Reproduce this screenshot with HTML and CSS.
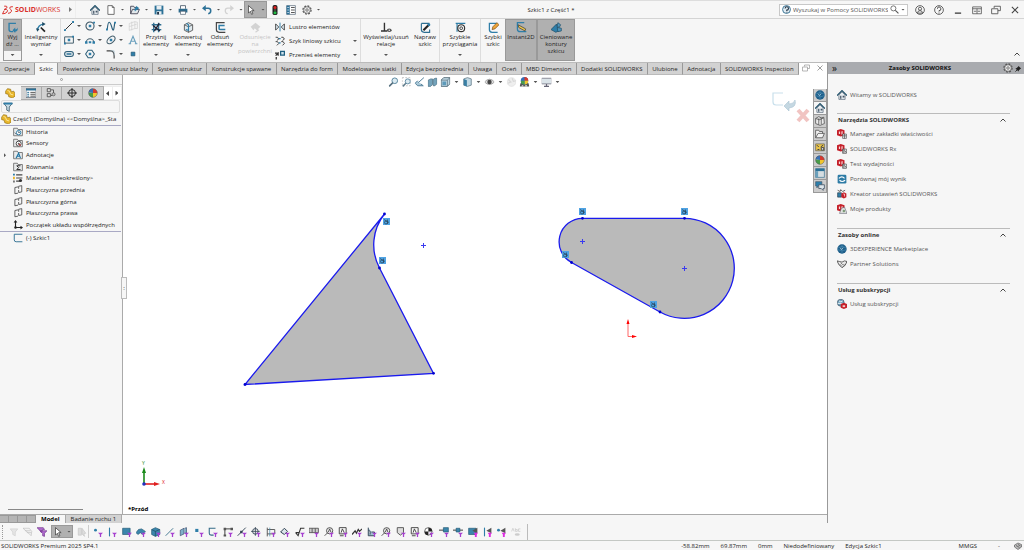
FILE: index.html
```html
<!DOCTYPE html>
<html lang="pl">
<head>
    <meta charset="UTF-8">
    <meta name="viewport" content="width=device-width, initial-scale=1.0">
    <title>Szkic1 z Część1 *</title>
    <link rel="stylesheet" href="styles.css">
</head>
<body>
<svg class="sprite" aria-hidden="true">
    <!-- title bar -->
    <symbol id="ds" viewBox="0 0 22 18"><g fill="none" stroke="#d9302c" stroke-width="1.8"><path d="M4 2h4q3 1 0 4l-4 2h4q4 1 1 5-3 3-8 3l3-6M20 3q-6-1-6 3 5 3 3 6-1 3-6 3"/></g></symbol>
    <symbol id="home" viewBox="0 0 16 16"><path d="M3 8v7h10V8L8 3z" fill="#e9eef1" stroke="#456" /><path d="M0 9l8-8 8 8" fill="none" stroke="#1f4f68" stroke-width="2"/><path d="M5 9h2v5H5zM9 9h3v3H9z" fill="#456"/></symbol>
    <symbol id="doc" viewBox="0 0 16 16"><path d="M3 1h7l3 3v11H3zM10 1v3h3" fill="#fff" stroke="#555" stroke-width="1.3"/></symbol>
    <symbol id="open" viewBox="0 0 16 16"><path d="M1 14V2h5l1 2h5v3M1 14l3-7h11l-3 7z" fill="#e3e9ec" stroke="#445" stroke-width="1.4"/><path d="M8 10V5h4M10 2l4 3-4 3z" fill="#2b7fa8" stroke="#2b7fa8"/></symbol>
    <symbol id="save" viewBox="0 0 16 16"><path d="M1 1h14v14H1z" fill="#2c7197"/><path d="M4 1h8v6H4zM4 10h8v5H4z" fill="#e8eef2"/><path d="M5 11h3v4H5z" fill="#234"/></symbol>
    <symbol id="print" viewBox="0 0 16 16"><path d="M4 6V1h8v5" fill="#fff" stroke="#456" stroke-width="1.3"/><path d="M1 6h14v6H1z" fill="#2c6a8c"/><path d="M4 10h8v5H4z" fill="#fff" stroke="#456"/></symbol>
    <symbol id="undo" viewBox="0 0 16 16"><path d="M3 5h7q4 0 4 4t-4 5" fill="none" stroke="#2c7197" stroke-width="2.4"/><path d="M0 5l6-5v10z" fill="#2c7197"/></symbol>
    <symbol id="redo" viewBox="0 0 16 16"><path d="M13 5H6q-4 0-4 4t4 5" fill="none" stroke="#d2d2d2" stroke-width="2"/><path d="M16 5l-6-5v10z" fill="#d2d2d2"/></symbol>
    <symbol id="cursor" viewBox="0 0 16 16"><path d="M4 1v12l3-3 2 5 2-1-2-5h4z" fill="#fff" stroke="#333" stroke-width="1.1"/></symbol>
    <symbol id="traffic" viewBox="0 0 16 16"><rect x="4" y="0" width="8" height="16" rx="3" fill="#222"/><circle cx="8" cy="4" r="2.4" fill="#d22"/><circle cx="8" cy="8" r="1.6" fill="#554"/><circle cx="8" cy="12.5" r="2.4" fill="#2b4"/></symbol>
    <symbol id="list" viewBox="0 0 16 16"><path d="M1 1h14v14H1z" fill="#fff" stroke="#456"/><path d="M1 1h5v14H1z" fill="#2c7197"/><path d="M8 4h6M8 8h6M8 12h6" stroke="#333" stroke-width="1.3"/><path d="M2 4h3M2 8h3M2 12h3" stroke="#cde" stroke-width="1.3"/></symbol>
    <symbol id="list-tab" viewBox="0 0 16 16"><path d="M0 1h16v14H0z" fill="#fff" stroke="#345"/><path d="M0 1h16v3H0z" fill="#2c7197"/><path d="M2 7h3M2 10h3M2 13h3" stroke="#2c7197" stroke-width="1.6"/><path d="M7 7h8M7 10h8M7 13h8" stroke="#333" stroke-width="1.3"/></symbol>
    <symbol id="gear" viewBox="0 0 16 16"><circle cx="8" cy="8" r="6.5" fill="none" stroke="#555" stroke-width="2" stroke-dasharray="3 2.1"/><circle cx="8" cy="8" r="5.3" fill="#eee" stroke="#555" stroke-width="1.1"/><circle cx="8" cy="8" r="2" fill="none" stroke="#555" stroke-width="1.2"/></symbol>
    <symbol id="help-blue" viewBox="0 0 16 16"><circle cx="8" cy="8" r="7" fill="#e3eef4" stroke="#2c6a8c" stroke-width="1.6"/><path d="M5.5 6q0-3 3-3t3 3-3 3v1.5M8.5 12v1.5" fill="none" stroke="#234" stroke-width="2"/></symbol>
    <symbol id="help" viewBox="0 0 16 16"><circle cx="8" cy="8" r="7" fill="none" stroke="#444" stroke-width="1.3"/><path d="M5.5 6q0-3 2.5-3t3 3-3 3v1.5M8 12v1.5" fill="none" stroke="#444" stroke-width="1.5"/></symbol>
    <symbol id="user" viewBox="0 0 16 16"><circle cx="8" cy="8" r="7" fill="none" stroke="#444" stroke-width="1.3"/><circle cx="8" cy="6" r="2.5" fill="none" stroke="#444" stroke-width="1.3"/><path d="M4 13q0-4 4-4t4 4z" fill="none" stroke="#444" stroke-width="1.3"/></symbol>
    <symbol id="lens" viewBox="0 0 16 16"><circle cx="6" cy="6" r="4.5" fill="none" stroke="#555" stroke-width="1.4"/><path d="M9.5 9.5L15 15" stroke="#555" stroke-width="2"/></symbol>
    <symbol id="min" viewBox="0 0 16 16"><path d="M3 13h10" stroke="#333" stroke-width="2"/></symbol>
    <symbol id="span" viewBox="0 0 16 16"><path d="M1 3h14v11H1zM1 6h14M8 6v8M3 10h4M9 10h4" fill="none" stroke="#555" stroke-width="1.3"/></symbol>
    <symbol id="restore" viewBox="0 0 16 16"><path d="M5 5V2h10v7h-4M1 6h10v8H1z" fill="none" stroke="#555" stroke-width="1.4"/></symbol>
    <symbol id="close" viewBox="0 0 16 16"><path d="M3 3l10 10M13 3L3 13" stroke="#444" stroke-width="1.7"/></symbol>
    <symbol id="up" viewBox="0 0 16 16"><path d="M3 11l5-5 5 5" fill="none" stroke="#444" stroke-width="2"/></symbol>

    <!-- ribbon -->
    <symbol id="sketch" viewBox="0 0 16 16"><path d="M13 2H3v9q0 3 3 3h3" fill="none" stroke="#2f7ea8" stroke-width="2"/><path d="M8 12l4-4v3q3 0 3-3 2 6-3 6v2z" fill="#2f7ea8"/></symbol>
    <symbol id="dim" viewBox="0 0 16 16"><path d="M2 12q1-8 9-9" fill="none" stroke="#2f7ea8" stroke-width="2"/><path d="M0 9l5 1-3 4zM9 0l5 3-5 3z" fill="#1c4c66"/><path d="M7 8l6 6" stroke="#222" stroke-width="2.5"/></symbol>
    <symbol id="line" viewBox="0 0 16 16"><path d="M2 14L14 2" stroke="#333" stroke-width="1.6"/><path d="M0 13h3v3H0zM13 0h3v3h-3z" fill="#2f7ea8"/></symbol>
    <symbol id="circle" viewBox="0 0 16 16"><circle cx="8" cy="8" r="6.5" fill="none" stroke="#3b5565" stroke-width="1.7"/><path d="M6 6h4v4H6zM13 1h3v3h-3z" fill="#2f7ea8"/></symbol>
    <symbol id="spline" viewBox="0 0 16 16"><path d="M2 14Q3 2 5 2t4 7 3 5 2-12" fill="none" stroke="#2d607c" stroke-width="1.9"/><path d="M0 12h3v3H0zM13 1h3v3h-3z" fill="#2f7ea8"/></symbol>
    <symbol id="plane-off" viewBox="0 0 16 16"><path d="M2 4l9-3v11l-9 3zM6 1v14M2 9l12-4M11 1l4 1v10h-4" fill="none" stroke="#ccc"/></symbol>
    <symbol id="rect" viewBox="0 0 16 16"><path d="M1 3h14v10H1z" fill="none" stroke="#46606e" stroke-width="1.6"/><path d="M6 6h4v4H6zM0 12h3v3H0zM13 1h3v3h-3z" fill="#2f7ea8"/></symbol>
    <symbol id="arc" viewBox="0 0 16 16"><path d="M2 12a6 6 0 1 1 12 0" fill="none" stroke="#46606e" stroke-width="1.8"/><path d="M0 10h4v4H0zM12 10h4v4h-4zM6 10h4v3H6z" fill="#2f7ea8"/></symbol>
    <symbol id="ellipse" viewBox="0 0 16 16"><ellipse cx="8" cy="8" rx="7.5" ry="4.5" transform="rotate(-42 8 8)" fill="none" stroke="#46606e" stroke-width="1.7"/><path d="M6 6h4v4H6z" fill="#2f7ea8"/></symbol>
    <symbol id="letter" viewBox="0 0 16 16"><path d="M3 14L8 2l5 12M5 10h6M1 14h4M11 14h4" fill="none" stroke="#6ba0bd" stroke-width="1.8"/></symbol>
    <symbol id="slot" viewBox="0 0 16 16"><rect x="1" y="4" width="14" height="8" rx="4" fill="none" stroke="#2f607a" stroke-width="1.8"/><path d="M4 6h8v4H4z" fill="#5b91ae"/></symbol>
    <symbol id="polygon" viewBox="0 0 16 16"><path d="M5 2h6l4 6-4 6H5L1 8z" fill="none" stroke="#2f607a" stroke-width="1.7"/><path d="M6 6h4v4H6z" fill="#2f7ea8"/></symbol>
    <symbol id="fillet" viewBox="0 0 16 16"><path d="M1 3h6q6 0 6 8v4" fill="none" stroke="#444" stroke-width="1.8"/><path d="M7 3h6v7" fill="none" stroke="#9bbccb"/></symbol>
    <symbol id="point" viewBox="0 0 16 16"><path d="M5 5h6v6H5z" fill="#2f7ea8" stroke="#23536d"/></symbol>
    <symbol id="trim" viewBox="0 0 16 16"><path d="M1 4h14M1 11h14M4 1v14M11 1v14" stroke="#2f6f92" stroke-width="2"/><path d="M5 13l7-11M3 5l10 8" stroke="#223" stroke-width="2"/></symbol>
    <symbol id="convert" viewBox="0 0 16 16"><path d="M2 4l6-3 6 3v8l-6 3-6-3z" fill="#dfe9ee" stroke="#555" stroke-width="1.3"/><path d="M2 4l6 3 6-3M8 7v8" fill="none" stroke="#555" stroke-width="1.2"/><path d="M5 2l3 2v8l-4-1" fill="none" stroke="#2f7ea8" stroke-width="1.7"/></symbol>
    <symbol id="offset" viewBox="0 0 16 16"><path d="M14 1H2v10q0 4 4 4h9" fill="none" stroke="#444" stroke-width="1.7"/><path d="M14 5H6v5q0 1 2 1h7" fill="none" stroke="#2f7ea8" stroke-width="2.2"/></symbol>
    <symbol id="surf-off" viewBox="0 0 16 16"><path d="M1 7l7-6 7 6-5 5-3-3-2 3z" fill="#d3d3d3"/><path d="M8 8l4 4-4 3" fill="none" stroke="#d3d3d3" stroke-width="2"/></symbol>
    <symbol id="mirror" viewBox="0 0 16 16"><path d="M1 3v10l5-5zM15 3v10l-5-5z" fill="#dbe8ef" stroke="#333" stroke-width="1.3"/><path d="M8 1v14" stroke="#2f7ea8" stroke-width="1.5"/></symbol>
    <symbol id="pattern" viewBox="0 0 16 16"><g fill="none" stroke="#333" stroke-width="1.4"><path d="M1 2h3l2 3-3 2M10 2h3l2 3-3 2M1 9h3l2 3-3 3M10 9h3l2 3-3 3"/></g><path d="M6 4h3M6 11h3" stroke="#2f7ea8" stroke-width="2"/></symbol>
    <symbol id="move" viewBox="0 0 16 16"><path d="M9 2h6v6H9z" fill="#cfe2ec" stroke="#1f5f80" stroke-width="2"/><path d="M2 15v-4M0 5h5v4M1 9l5-5" fill="none" stroke="#333" stroke-width="2"/></symbol>
    <symbol id="relations" viewBox="0 0 16 16"><path d="M5 1v12M0 13h9" stroke="#333" stroke-width="2"/><ellipse cx="12" cy="12" rx="3.5" ry="2.5" fill="#555"/><circle cx="12" cy="12" r="1" fill="#fff"/></symbol>
    <symbol id="repair" viewBox="0 0 16 16"><path d="M2 2h11v3M2 2v9q0 4 4 4h8v-4" fill="none" stroke="#2f6f92" stroke-width="1.7"/><path d="M5 12l8-8" stroke="#222" stroke-width="3"/><circle cx="13" cy="4" r="2" fill="#2f7ea8"/></symbol>
    <symbol id="snap" viewBox="0 0 16 16"><path d="M1 2h14M3 2v12" stroke="#2f7ea8" stroke-width="1.7"/><circle cx="9" cy="9" r="5" fill="none" stroke="#333" stroke-width="1.7"/><circle cx="9" cy="9" r="2" fill="none" stroke="#333" stroke-width="1.3"/></symbol>
    <symbol id="rapid" viewBox="0 0 16 16"><path d="M13 2H2v9q0 4 4 4h8" fill="none" stroke="#2f7ea8" stroke-width="1.8"/><path d="M6 11l1-4 6-6 3 3-6 6z" fill="#eea63a" stroke="#7a4a12"/></symbol>
    <symbol id="instant" viewBox="0 0 16 16"><path d="M12 1H2v9q0 4 4 4h9" fill="none" stroke="#2f7ea8" stroke-width="1.8"/><path d="M3 4l11 6-1 3-9-5z" fill="#f0c84a" stroke="#333"/></symbol>
    <symbol id="shaded" viewBox="0 0 16 16"><path d="M0 11l8-8 3 10-4 2z" fill="#2f7ea8" stroke="#1c4c66"/><path d="M10 1l4 3-2 4-3-2zM9 8l6 1v4l-5 1z" fill="#4f97bd" stroke="#1c4c66"/></symbol>

    <!-- view toolbar -->
    <symbol id="zoom-fit" viewBox="0 0 16 16"><circle cx="10" cy="6" r="4.5" fill="#dcebf2" stroke="#5f8ba2" stroke-width="1.6"/><path d="M7 9l-6 6" stroke="#55707f" stroke-width="2.6"/></symbol>
    <symbol id="zoom-area" viewBox="0 0 16 16"><path d="M1 1h13v13H1z" fill="none" stroke="#aaa" stroke-dasharray="3 2"/><circle cx="10" cy="7" r="4" fill="#dcebf2" stroke="#5f8ba2" stroke-width="1.5"/><path d="M7 10l-5 5" stroke="#5f7c8c" stroke-width="2.3"/></symbol>
    <symbol id="prev-view" viewBox="0 0 16 16"><path d="M15 1L6 9M5 6l-4 4 4 4h9l-4-3" fill="#a9c8d8" stroke="#55809a" stroke-width="1.6"/></symbol>
    <symbol id="section" viewBox="0 0 16 16"><path d="M1 5l4-2h3v9l-3 3H1zM9 4l3-2h3v9l-3 3H9z" fill="#74a3bb" stroke="#456a7d"/></symbol>
    <symbol id="cube" viewBox="0 0 16 16"><path d="M1 5l4-4h10v10l-4 4H1z" fill="#bfd7e3" stroke="#47616f" stroke-width="1.3"/><path d="M3 7h6v6H3z" fill="#5d9aba"/><path d="M1 5h10v10M11 5l4-4" fill="none" stroke="#47616f"/></symbol>
    <symbol id="cylinder" viewBox="0 0 16 16"><path d="M2 3l6-2 6 2v10l-6 2-6-2z" fill="#c3dae5" stroke="#667e8a" stroke-width="1.3"/><path d="M2 3l5 2v10l-5-2z" fill="#397fa4"/></symbol>
    <symbol id="eye" viewBox="0 0 16 16"><path d="M0 8q8-9 16 0-8 8-16 0z" fill="#ddd" stroke="#999" stroke-width="1.3"/><circle cx="8" cy="8" r="3.5" fill="#444"/></symbol>
    <symbol id="ball-off" viewBox="0 0 16 16"><circle cx="8" cy="8" r="7" fill="#eee" stroke="#ddd"/><path d="M3 4l4 4-5 2M9 2l2 5 4-1" fill="none" stroke="#d8d8d8" stroke-width="2"/></symbol>
    <symbol id="ball" viewBox="0 0 16 16"><circle cx="8" cy="8" r="7.5" fill="#d9e1e8"/><path d="M8 8V1a7 7 0 0 0-7 6z" fill="#3770b8"/><path d="M8 8V1a7 7 0 0 1 7 7z" fill="#d63a2e"/><path d="M8 8h7a7 7 0 0 1-7 7z" fill="#f0c52e"/><path d="M8 8v7a7 7 0 0 1-7-8z" fill="#4a9d48"/><circle cx="8" cy="8" r="7" fill="none" stroke="#555" stroke-width=".8"/></symbol>
    <symbol id="scene" viewBox="0 0 16 16"><path d="M0 15l2-6h12l2 6z" fill="#555"/><circle cx="8" cy="6" r="6" fill="#3770b8"/><path d="M8 6V0a6 6 0 0 1 6 6z" fill="#d63a2e"/><path d="M8 6h6a6 6 0 0 1-6 6z" fill="#f0c52e"/><path d="M8 6v6a6 6 0 0 1-6-6z" fill="#4a9d48"/><path d="M3 15l1-2h2v2zM9 15v-2h3v2z" fill="#ddd"/></symbol>
    <symbol id="monitor" viewBox="0 0 16 16"><path d="M0 2h16v9H0z" fill="#dbe4e9" stroke="#778" stroke-width="1.3"/><path d="M4 15h8M8 11v4" stroke="#667" stroke-width="2"/></symbol>

    <!-- feature tree -->
    <symbol id="part" viewBox="0 0 16 16"><path d="M1 5l3-4 5 1 1 4 4-1 2 4v4l-4 3-6-2-1-4-4-1z" fill="#e8b62c" stroke="#8f6b10"/><path d="M4 4l3 1 2 5 4 1" fill="none" stroke="#fbe490" stroke-width="1.6"/></symbol>
    <symbol id="config" viewBox="0 0 16 16"><path d="M2 1h5v5H2zM2 9h5v5H2zM8 3h4v5M8 12h2" fill="#ddd" stroke="#444" stroke-width="1.3"/><circle cx="12" cy="10" r="2.5" fill="#bbb" stroke="#444"/></symbol>
    <symbol id="target" viewBox="0 0 16 16"><circle cx="8" cy="8" r="5.5" fill="none" stroke="#222" stroke-width="1.5"/><path d="M8 0v16M0 8h16" stroke="#222" stroke-width="1.5"/></symbol>
    <symbol id="filter" viewBox="0 0 16 16"><path d="M1 2h14l-5 6v7l-4-2V8z" fill="#c9dbe4" stroke="#38586a" stroke-width="1.3"/><path d="M1 1h14v3H1z" fill="#2f7ea8"/></symbol>
    <symbol id="folder" viewBox="0 0 16 16"><path d="M1 14V2h6l1 2h7v10z" fill="#e8eaeb" stroke="#666" stroke-width="1.3"/></symbol>
    <symbol id="f-history" viewBox="0 0 16 16"><use href="#folder"/><circle cx="9" cy="9" r="3.5" fill="#fff" stroke="#2f7ea8" stroke-width="1.5"/><path d="M9 7v2h2M3 9l3 3" fill="none" stroke="#234" stroke-width="1.2"/></symbol>
    <symbol id="f-sensor" viewBox="0 0 16 16"><use href="#folder"/><circle cx="9" cy="9" r="4" fill="#fff" stroke="#444" stroke-width="1.5"/><path d="M9 9l3 3" stroke="#c33" stroke-width="2"/><circle cx="9" cy="9" r="1.5" fill="#555"/></symbol>
    <symbol id="f-note" viewBox="0 0 16 16"><use href="#folder"/><path d="M5 13l4-8 3 8M6 10h5" fill="none" stroke="#2478a6" stroke-width="1.8"/></symbol>
    <symbol id="f-equation" viewBox="0 0 16 16"><use href="#folder"/><path d="M12 6H6l3 3-3 3h6" fill="none" stroke="#333" stroke-width="1.6"/></symbol>
    <symbol id="material" viewBox="0 0 16 16"><path d="M5 3h10M5 8h10M5 13h6" stroke="#444" stroke-width="1.9"/><path d="M0 1h3v3H0z" fill="#2f7ea8"/><path d="M0 6h3v4H0z" fill="#e8b62c"/><path d="M0 12h3v3H0z" fill="#777"/><circle cx="12" cy="12" r="2.5" fill="#333"/></symbol>
    <symbol id="plane" viewBox="0 0 16 16"><path d="M8 3L3 4v10l5-1M9 2l5-1v10l-5 1M9 2v4M9 8v4" fill="none" stroke="#444" stroke-width="1.3"/></symbol>
    <symbol id="origin" viewBox="0 0 16 16"><path d="M4 2v10h10" fill="none" stroke="#222" stroke-width="1.8"/><path d="M1 4l3-4 3 4zM12 9l4 3-4 3z" fill="#222"/><circle cx="4" cy="12" r="2" fill="#222"/></symbol>
    <symbol id="sketch-item" viewBox="0 0 16 16"><path d="M15 2H2v9q0 3 3 3h10" fill="none" stroke="#2f6f92" stroke-width="1.5"/></symbol>

    <!-- task pane -->
    <symbol id="globe" viewBox="0 0 16 16"><circle cx="8" cy="8" r="7.5" fill="#1f5f8a"/><path d="M2 6q6-4 12 0M1 9q7 4 14 0M8 1v14" fill="none" stroke="#4b8fb6"/><path d="M5 6l2 3 3-3" stroke="#cfe4ef" fill="none"/></symbol>
    <symbol id="library" viewBox="0 0 16 16"><path d="M1 4l5-3 4 2 4-1 1 10-7 3-7-3zM6 4v10M10 3v10M1 4l6 2 7-3" fill="#ececec" stroke="#555" stroke-width="1.3"/></symbol>
    <symbol id="folder-open" viewBox="0 0 16 16"><path d="M1 14V2h5l1 2h5v3M1 14l4-7h10l-3 7z" fill="#f3f3f3" stroke="#555" stroke-width="1.3"/></symbol>
    <symbol id="palette" viewBox="0 0 16 16"><path d="M1 3h14v11H1z" fill="#e8c34a" stroke="#555"/><path d="M3 5l3 3M13 5l-4 3M4 12h3M10 9h4v4h-4z" stroke="#444" stroke-width="1.6" fill="#eee"/></symbol>
    <symbol id="props" viewBox="0 0 16 16"><path d="M1 1h14v14H1z" fill="#d5dde1" stroke="#2c6a8c"/><path d="M1 1h14v4H1z" fill="#2c7197"/><path d="M1 5h4v10H1z" fill="#6aa0bc"/></symbol>
    <symbol id="forum" viewBox="0 0 16 16"><path d="M1 1h10v7H5l-2 3V8H1z" fill="#2c7fab" stroke="#456"/><path d="M6 6h9v6h-2v3l-3-3H6z" fill="#dde6eb" stroke="#456" stroke-width="1.3"/></symbol>
    <symbol id="sw" viewBox="0 0 16 16"><path d="M0 2l6-2 6 2v8l-6 2-6-2z" fill="#c5202a"/><path d="M3 4h2v4H3zM7 4l2-1v5l-2 1z" fill="#f6d5d5"/></symbol>
    <symbol id="sw-tab" viewBox="0 0 16 16"><use href="#sw"/><path d="M9 8h6v7H9zM9 11h6M12 8v7" fill="#eee" stroke="#444"/></symbol>
    <symbol id="sw-rx" viewBox="0 0 16 16"><use href="#sw"/><path d="M9 8h6v7H9z" fill="#eee" stroke="#444"/><path d="M10 14V9h2v2l3 3M14 11l-3 3" fill="none" stroke="#444"/></symbol>
    <symbol id="compare" viewBox="0 0 16 16"><rect x="1" y="1" width="14" height="14" rx="2" fill="#2d7ba5"/><path d="M3 7q5-5 9 0M13 10q-5 4-9 0" fill="none" stroke="#fff" stroke-width="1.8"/></symbol>
    <symbol id="wizard" viewBox="0 0 16 16"><path d="M1 2l4 2 1-3 3 3 4-2" fill="none" stroke="#444" stroke-width="1.3"/><path d="M1 6h6v7H1z" fill="#2f7ea8" stroke="#234"/><path d="M7 7l4-2 4 2v6l-4 2-4-2z" fill="#c5202a"/><path d="M10 8h2v4" fill="none" stroke="#fff"/></symbol>
    <symbol id="products" viewBox="0 0 16 16"><use href="#sw"/><path d="M4 15l3-8 5-2 4 10z" fill="#e1e4e1" stroke="#667"/><circle cx="11" cy="11" r="2" fill="#7b9a78"/></symbol>
    <symbol id="handshake" viewBox="0 0 16 16"><path d="M0 3l4 1 4 1 4-2 4 1-3 6-5 4-5-5z" fill="#e7e7e7" stroke="#444" stroke-width="1.3"/><path d="M6 6l3 3 4 1M4 8l4 4" fill="none" stroke="#444"/></symbol>
    <symbol id="service" viewBox="0 0 16 16"><circle cx="6" cy="6" r="5.5" fill="#6fa3bf" stroke="#345"/><path d="M3 3q3 3 6 0M1 7h8" fill="none" stroke="#fff" stroke-width="1.3"/><path d="M6 8l5-2 5 2v6l-5 2-5-2z" fill="#c5202a"/><path d="M9 10h4v3H9z" fill="#f3caca"/></symbol>
    <symbol id="tag-gray" viewBox="0 0 16 16"><path d="M1 6l7-4 7 3v5l-7 5-7-5z" fill="#bbb" stroke="#555" stroke-width="1.3"/><path d="M4 7l7 4M8 5l5 3" stroke="#444" stroke-width="1.3"/></symbol>
    <symbol id="pin" viewBox="0 0 16 16"><path d="M8 2l6 6-2 1-3 3-1 3-7-7 3-1 3-3z" fill="#222"/><path d="M5 11l-4 4" stroke="#222" stroke-width="2"/></symbol>

    <!-- selection filters -->
    <symbol id="funnel" viewBox="0 0 16 16"><path d="M8 9h8l-3 3v4h-2v-4z" fill="#a63fd0"/></symbol>
    <symbol id="funnel-eye" viewBox="0 0 16 16"><path d="M7 6l8-5v9z" fill="#555"/><path d="M9 9h7l-2 3v4h-3v-4z" fill="#dd2be0"/></symbol>
    <symbol id="g-funnel-off" viewBox="0 0 16 16"><path d="M2 3h12l-4 5v6l-4-2V8z" fill="#e5e5e5" stroke="#ccc"/></symbol>
    <symbol id="g-funnels-off" viewBox="0 0 16 16"><path d="M0 2h10l4 5-1 7-4-4z" fill="#f2f2f2" stroke="#bbb"/><path d="M3 6h9M6 9h7" stroke="#bbb"/></symbol>
    <symbol id="g-funnels" viewBox="0 0 16 16"><path d="M0 1h10l2 3H9L7 9 4 5zM5 6h11l-4 4v5l-3-1v-4z" fill="#b16bd0" stroke="#6b2f86"/></symbol>
    <symbol id="g-wand-off" viewBox="0 0 16 16"><path d="M2 2h5v11H2zM8 2l6 8-3 1 1 4-4-4z" fill="#ddd" stroke="#c4c4c4"/></symbol>
    <symbol id="g-point" viewBox="0 0 16 16"><circle cx="4" cy="5" r="2.3" fill="#2f7ea8"/></symbol>
    <symbol id="g-vline" viewBox="0 0 16 16"><path d="M4 1v14" stroke="#2f7ea8" stroke-width="1.8"/></symbol>
    <symbol id="g-face" viewBox="0 0 16 16"><path d="M1 2h12v10H1z" fill="#3b86ac" stroke="#1f536f"/></symbol>
    <symbol id="g-surface" viewBox="0 0 16 16"><path d="M0 9l4-5 5-1 6 4-5 5-3-3-4 3z" fill="#3b86ac" stroke="#1f536f"/></symbol>
    <symbol id="g-solid" viewBox="0 0 16 16"><path d="M1 4l6-3 7 3v8l-7 3-6-3z" fill="#3b86ac" stroke="#1f536f"/><path d="M1 4l6 3v8M7 7l7-3" fill="none" stroke="#1a455c"/></symbol>
    <symbol id="g-axis" viewBox="0 0 16 16"><path d="M1 14L13 2" stroke="#4c7d96" stroke-width="1.6"/></symbol>
    <symbol id="g-plane" viewBox="0 0 16 16"><path d="M2 5l6-3v9l-6 3zM9 2l3-1v9H9" fill="#7fb0c9" stroke="#346"/></symbol>
    <symbol id="g-sq" viewBox="0 0 16 16"><path d="M2 3h5v5H2z" fill="#2f7ea8"/></symbol>
    <symbol id="g-sketch" viewBox="0 0 16 16"><path d="M12 2H2v8q0 3 3 3h4" fill="none" stroke="#346b88" stroke-width="1.7"/></symbol>
    <symbol id="g-seg" viewBox="0 0 16 16"><path d="M3 14V3h12" fill="none" stroke="#444" stroke-width="1.6"/><path d="M1 1h4v4H1zM1 12h4v3H1zM12 1h4v4h-4z" fill="#555"/></symbol>
    <symbol id="g-mid" viewBox="0 0 16 16"><path d="M1 14L14 1" stroke="#345" stroke-width="1.5"/><path d="M5 6h4v4H5z" fill="#345"/></symbol>
    <symbol id="g-center" viewBox="0 0 16 16"><circle cx="7" cy="7" r="4.5" fill="none" stroke="#345" stroke-width="1.5"/><path d="M7 0v14M0 7h14" stroke="#345" stroke-width="1.3"/></symbol>
    <symbol id="g-dim" viewBox="0 0 16 16"><path d="M2 1v14M6 4h8v7H6M2 4h4M2 11h4" fill="none" stroke="#555" stroke-width="1.5"/><path d="M6 1v14" stroke="#2f7ea8"/></symbol>
    <symbol id="g-tag" viewBox="0 0 16 16"><path d="M1 8l6-6 5 5-5 5z" fill="#dbe5ea" stroke="#345" stroke-width="1.6"/></symbol>
    <symbol id="g-check" viewBox="0 0 16 16"><path d="M1 9l4 5 4-12h6M1 9h5" fill="none" stroke="#333" stroke-width="1.7"/></symbol>
    <symbol id="g-frame" viewBox="0 0 16 16"><path d="M0 2h15v7H0zM5 2v7M10 2v7" fill="#ccc" stroke="#555" stroke-width="1.4"/></symbol>
    <symbol id="g-balloon" viewBox="0 0 16 16"><circle cx="9" cy="6" r="5" fill="#eee" stroke="#444" stroke-width="1.4"/><path d="M6 9l-5 5M7 8l2-5 2 5" fill="none" stroke="#444" stroke-width="1.4"/></symbol>
    <symbol id="g-datum" viewBox="0 0 16 16"><path d="M2 1h11v10H2zM5 9l2-6 3 6M3 14h6" fill="none" stroke="#444" stroke-width="1.5"/></symbol>
    <symbol id="g-weld" viewBox="0 0 16 16"><path d="M0 12l5-6 2 4 3-6 2 3 4-4" fill="none" stroke="#333" stroke-width="1.9"/></symbol>
    <symbol id="g-graph" viewBox="0 0 16 16"><path d="M2 1v13h10M2 5l3 2v5M7 8h5v5" fill="#9fc0d0" stroke="#345" stroke-width="1.5"/></symbol>
    <symbol id="g-hatch" viewBox="0 0 16 16"><path d="M2 1h10v8l-5 4-5-4z" fill="#ddd" stroke="#555" stroke-width="1.5"/></symbol>
    <symbol id="g-quad" viewBox="0 0 16 16"><circle cx="7" cy="7" r="6" fill="#fff" stroke="#222"/><path d="M7 7V1a6 6 0 0 1 6 6zM7 7v6a6 6 0 0 1-6-6z" fill="#222"/></symbol>
    <symbol id="g-route" viewBox="0 0 16 16"><path d="M0 5h8" stroke="#333" stroke-width="1.5"/><path d="M7 1h8v7H7z" fill="#3b86ac" stroke="#1f536f"/></symbol>
    <symbol id="g-node" viewBox="0 0 16 16"><path d="M0 5h16" stroke="#333" stroke-width="1.5"/><path d="M5 2h6v6H5z" fill="#3b86ac" stroke="#1f536f"/></symbol>
    <symbol id="g-abc-off" viewBox="0 0 16 16"><path d="M1 7l2-5 2 5M7 2v5h3V4H7M15 3h-3v4h3" fill="none" stroke="#ccc" stroke-width="1.3"/><ellipse cx="10" cy="12" rx="4" ry="2" fill="#ccc"/></symbol>
</svg>

<header class="titlebar">
    <div class="brand">
        <svg class="ds"><use href="#ds"/></svg>
        <span><b>SOLID</b>WORKS</span>
        <i class="arrow-right"></i>
    </div>
    <div class="quick">
        <button aria-label="Strona główna"><svg><use href="#home"/></svg></button>
        <button class="drop" aria-label="Nowy"><svg><use href="#doc"/></svg></button>
        <button class="drop" aria-label="Otwórz"><svg><use href="#open"/></svg></button>
        <button class="drop" aria-label="Zapisz"><svg><use href="#save"/></svg></button>
        <button class="drop" aria-label="Drukuj"><svg><use href="#print"/></svg></button>
        <button class="drop" aria-label="Cofnij"><svg><use href="#undo"/></svg></button>
        <button class="drop redo" aria-label="Ponów"><svg><use href="#redo"/></svg></button>
        <button class="drop pressed" aria-label="Wybierz"><svg><use href="#cursor"/></svg></button>
        <button aria-label="Odbuduj"><svg><use href="#traffic"/></svg></button>
        <button aria-label="Właściwości pliku"><svg><use href="#list"/></svg></button>
        <button class="drop" aria-label="Opcje"><svg><use href="#gear"/></svg></button>
    </div>
    <h1>Szkic1 z Część1 *</h1>
    <form class="search">
        <svg><use href="#help-blue"/></svg>
        <input type="text" aria-label="Szukaj" placeholder="Wyszukaj w Pomocy SOLIDWORKS">
        <svg><use href="#lens"/></svg>
        <i class="caret"></i>
    </form>
    <div class="window">
        <button aria-label="Konto"><svg><use href="#user"/></svg></button>
        <button aria-label="Pomoc"><svg><use href="#help"/></svg></button>
        <button aria-label="Minimalizuj"><svg><use href="#min"/></svg></button>
        <button aria-label="Rozciągnij"><svg><use href="#span"/></svg></button>
        <button aria-label="Przywróć"><svg><use href="#restore"/></svg></button>
        <button aria-label="Zamknij"><svg><use href="#close"/></svg></button>
    </div>
</header>

<div class="ribbon">
    <div class="group">
        <button class="tool exit pressed"><svg><use href="#sketch"/></svg><span>Wyj<br>dź ...</span><i class="caret"></i></button>
        <button class="tool w38"><svg><use href="#dim"/></svg><span>Inteligentny<br>wymiar</span><i class="caret"></i></button>
    </div>
    <div class="group shapes">
        <button class="drop" aria-label="Linia"><svg><use href="#line"/></svg></button>
        <button class="drop" aria-label="Okrąg"><svg><use href="#circle"/></svg></button>
        <button class="drop" aria-label="Splajn"><svg><use href="#spline"/></svg></button>
        <button aria-label="Płaszczyzna"><svg><use href="#plane-off"/></svg></button>
        <button class="drop" aria-label="Prostokąt"><svg><use href="#rect"/></svg></button>
        <button class="drop" aria-label="Łuk"><svg><use href="#arc"/></svg></button>
        <button class="drop" aria-label="Elipsa"><svg><use href="#ellipse"/></svg></button>
        <button aria-label="Tekst"><svg><use href="#letter"/></svg></button>
        <button class="drop" aria-label="Szczelina"><svg><use href="#slot"/></svg></button>
        <button aria-label="Wielobok"><svg><use href="#polygon"/></svg></button>
        <button class="drop" aria-label="Zaokrąglenie"><svg><use href="#fillet"/></svg></button>
        <button aria-label="Punkt"><svg><use href="#point"/></svg></button>
    </div>
    <div class="group">
        <button class="tool w32"><svg><use href="#trim"/></svg><span>Przytnij<br>elementy</span><i class="caret"></i></button>
        <button class="tool w32"><svg><use href="#convert"/></svg><span>Konwertuj<br>elementy</span><i class="caret"></i></button>
        <button class="tool w32"><svg><use href="#offset"/></svg><span>Odsuń<br>elementy</span></button>
        <button class="tool w38" disabled><svg><use href="#surf-off"/></svg><span>Odsunięcie<br>na<br>powierzchni</span></button>
        <div class="stack">
            <button><svg><use href="#mirror"/></svg><span>Lustro elementów</span></button>
            <button><svg><use href="#pattern"/></svg><span>Szyk liniowy szkicu</span><i class="caret"></i></button>
            <button><svg><use href="#move"/></svg><span>Przenieś elementy</span><i class="caret"></i></button>
        </div>
    </div>
    <div class="group">
        <button class="tool w50"><svg><use href="#relations"/></svg><span>Wyświetlaj/usuń<br>relacje</span><i class="caret"></i></button>
        <button class="tool w28"><svg><use href="#repair"/></svg><span>Napraw<br>szkic</span></button>
    </div>
    <div class="group">
        <button class="tool w40"><svg><use href="#snap"/></svg><span>Szybkie<br>przyciągania</span><i class="caret"></i></button>
    </div>
    <div class="group last">
        <button class="tool w24"><svg><use href="#rapid"/></svg><span>Szybki<br>szkic</span></button>
        <button class="tool w32 pressed"><svg><use href="#instant"/></svg><span>Instant2D</span></button>
        <button class="tool w38 pressed"><svg><use href="#shaded"/></svg><span>Cieniowane<br>kontury<br>szkicu</span></button>
    </div>
    <button class="fold" aria-label="Zwiń"><svg><use href="#up"/></svg></button>
</div>

<main>
    <div class="document">
        <nav class="tabs">
            <div class="tablist">
                <button>Operacje</button>
                <button class="active">Szkic</button>
                <button>Powierzchnie</button>
                <button>Arkusz blachy</button>
                <button>System struktur</button>
                <button>Konstrukcje spawane</button>
                <button>Narzędzia do form</button>
                <button>Modelowanie siatki</button>
                <button>Edycja bezpośrednia</button>
                <button>Uwaga</button>
                <button>Oceń</button>
                <button>MBD Dimension</button>
                <button>Dodatki SOLIDWORKS</button>
                <button>Ulubione</button>
                <button>Adnotacja</button>
                <button>SOLIDWORKS Inspection</button>
            </div>
            <button class="doc-btn" aria-label="Przywróć dokument"><svg><use href="#restore"/></svg></button>
            <button class="doc-btn" aria-label="Zamknij dokument"><svg><use href="#close"/></svg></button>
        </nav>

        <div class="work">
            <aside class="tree">
                <div class="grip"><i></i></div>
                <div class="tree-tabs">
                    <button class="active" aria-label="Drzewo operacji"><svg><use href="#part"/></svg></button>
                    <button aria-label="Właściwości"><svg><use href="#list-tab"/></svg></button>
                    <button aria-label="Konfiguracje"><svg><use href="#config"/></svg></button>
                    <button aria-label="DimXpert"><svg><use href="#target"/></svg></button>
                    <button aria-label="Wygląd"><svg><use href="#ball"/></svg></button>
                    <button class="step" aria-label="Wstecz"><i class="arrow-left"></i></button>
                    <button class="step" aria-label="Dalej"><i class="arrow-right"></i></button>
                </div>
                <div class="tree-filter"><svg><use href="#filter"/></svg></div>
                <p class="root"><svg><use href="#part"/></svg>Część1 (Domyślna) &lt;&lt;Domyślna&gt;_Sta</p>
                <ul>
                    <li><svg><use href="#f-history"/></svg>Historia</li>
                    <li><svg><use href="#f-sensor"/></svg>Sensory</li>
                    <li class="expand"><svg><use href="#f-note"/></svg>Adnotacje</li>
                    <li><svg><use href="#f-equation"/></svg>Równania</li>
                    <li><svg><use href="#material"/></svg>Materiał &lt;nieokreślony&gt;</li>
                    <li><svg><use href="#plane"/></svg>Płaszczyzna przednia</li>
                    <li><svg><use href="#plane"/></svg>Płaszczyzna górna</li>
                    <li><svg><use href="#plane"/></svg>Płaszczyzna prawa</li>
                    <li><svg><use href="#origin"/></svg>Początek układu współrzędnych</li>
                </ul>
                <p class="current"><svg><use href="#sketch-item"/></svg>(-) Szkic1</p>
                <div class="scroll"></div>
                <button class="splitter" aria-label="Zwiń panel">:</button>
            </aside>

            <section class="canvas">
                <svg class="drawing">
                    <g transform="translate(-123 -75)">
                        <path class="contour" d="M384.5 214L245 384.5l188.5-11L379.5 268A49.5 49.5 0 0 1 384.5 214z"/>
                        <path class="contour" d="M582.5 218.3H684.5A50 50 0 1 1 660 312L571.5 262.5A23.5 23.5 0 0 1 582.5 218.3z"/>
                        <path class="cross" d="M421 245.5h5M423.5 243v5M580 241.5h5M582.5 239v5M682 268.5h5M684.5 266v5"/>
                        <g class="vertex">
                            <circle cx="384.5" cy="214" r="1.4"/><circle cx="245" cy="384.5" r="1.4"/><circle cx="433.5" cy="373.3" r="1.4"/><circle cx="379.5" cy="268" r="1.4"/>
                            <circle cx="582.5" cy="218.3" r="1.4"/><circle cx="684.5" cy="218.3" r="1.4"/><circle cx="660" cy="312" r="1.4"/><circle cx="571.5" cy="262.5" r="1.4"/>
                        </g>
                        <symbol id="tangent" viewBox="0 0 14 14"><path d="M0 0h14v14H0z" fill="#4fa3e3"/><circle cx="6" cy="9" r="3" fill="none" stroke="#2b4a61" stroke-width="1.6"/><path d="M2 3l10 6M9 3v9" stroke="#2b4a61" stroke-width="1.5"/></symbol>
                        <use href="#tangent" x="383" y="218" width="7" height="7"/>
                        <use href="#tangent" x="379" y="257" width="7" height="7"/>
                        <use href="#tangent" x="579" y="208" width="7" height="7"/>
                        <use href="#tangent" x="681" y="208" width="7" height="7"/>
                        <use href="#tangent" x="562" y="251" width="7" height="7"/>
                        <use href="#tangent" x="650" y="301" width="7" height="7"/>
                        <!-- sketch origin -->
                        <path d="M628 322v14.5h5" fill="none" stroke="#f66"/>
                        <path d="M626.5 324l1.5-5 1.5 5zM632 335l5 1.5-5 1.5z" fill="#f00"/>
                        <!-- triad -->
                        <path d="M144 484v-12" stroke="#1a8a1a" stroke-width="1.6"/>
                        <path d="M142 473l2-6 2 6z" fill="#1a8a1a"/>
                        <path d="M144 484h12" stroke="#e02020" stroke-width="1.6"/>
                        <path d="M154 482l6 2-6 2z" fill="#e02020"/>
                        <circle cx="144" cy="484" r="1.8" fill="#2030c0"/>
                        <text x="142" y="465" class="axis-y">Y</text>
                        <text x="162" y="484" class="axis-x">X</text>
                    </g>
                </svg>
                <div class="view-tools">
                    <button aria-label="Dopasuj"><svg><use href="#zoom-fit"/></svg></button>
                    <button aria-label="Obszar"><svg><use href="#zoom-area"/></svg></button>
                    <button aria-label="Poprzedni widok"><svg><use href="#prev-view"/></svg></button>
                    <button aria-label="Przekrój"><svg><use href="#section"/></svg></button>
                    <button class="drop" aria-label="Orientacja"><svg><use href="#cube"/></svg></button>
                    <button class="drop" aria-label="Styl"><svg><use href="#cylinder"/></svg></button>
                    <button class="drop" aria-label="Ukryj"><svg><use href="#eye"/></svg></button>
                    <button aria-label="Edytuj wygląd"><svg><use href="#ball-off"/></svg></button>
                    <button class="drop" aria-label="Scena"><svg><use href="#scene"/></svg></button>
                    <button class="drop" aria-label="Ustawienia widoku"><svg><use href="#monitor"/></svg></button>
                </div>
                <svg class="confirm" viewBox="0 0 40 32">
                    <path d="M11 2H1v9q0 3 3 3h7" fill="none" stroke="#c9e0ec" stroke-width="1.2"/>
                    <path d="M12 15l5-5v3q5 0 6-4 2 7-6 8v3z" fill="#c5d8e2" stroke="#a9c3d1" stroke-width=".6"/>
                    <path d="M26 19l10 11M36 19L26 30" stroke="#f1c4c2" stroke-width="4"/>
                </svg>
                <div class="pane-tabs">
                    <button aria-label="3DEXPERIENCE"><svg><use href="#globe"/></svg></button>
                    <button class="active" aria-label="Zasoby"><svg><use href="#home"/></svg></button>
                    <button aria-label="Biblioteka"><svg><use href="#library"/></svg></button>
                    <button aria-label="Eksplorator"><svg><use href="#folder-open"/></svg></button>
                    <button aria-label="Paleta"><svg><use href="#palette"/></svg></button>
                    <button aria-label="Wyglądy"><svg><use href="#ball"/></svg></button>
                    <button aria-label="Właściwości"><svg><use href="#props"/></svg></button>
                    <button aria-label="Forum"><svg><use href="#forum"/></svg></button>
                </div>
                <b class="view-name">*Przód</b>
            </section>
        </div>

        <div class="model-tabs">
            <div class="steps"><i></i><i></i><i></i><i></i></div>
            <button class="active">Model</button>
            <button>Badanie ruchu 1</button>
        </div>
    </div>

    <aside class="pane">
        <header>
            <span>»</span>
            <h2>Zasoby SOLIDWORKS</h2>
            <button aria-label="Ustawienia"><svg><use href="#gear"/></svg></button>
            <button aria-label="Przypnij"><svg class="pin"><use href="#pin"/></svg></button>
        </header>
        <div class="pane-body">
            <a class="welcome" href="#"><svg><use href="#home"/></svg>Witamy w SOLIDWORKS</a>
            <section>
                <h3>Narzędzia SOLIDWORKS <svg><use href="#up"/></svg></h3>
                <a href="#"><svg><use href="#sw-tab"/></svg>Manager zakładki właściwości</a>
                <a href="#"><svg><use href="#sw-rx"/></svg>SOLIDWORKS Rx</a>
                <a href="#"><svg><use href="#sw-rx"/></svg>Test wydajności</a>
                <a href="#"><svg><use href="#compare"/></svg>Porównaj mój wynik</a>
                <a href="#"><svg><use href="#wizard"/></svg>Kreator ustawień SOLIDWORKS</a>
                <a href="#"><svg><use href="#products"/></svg>Moje produkty</a>
            </section>
            <section>
                <h3>Zasoby online <svg><use href="#up"/></svg></h3>
                <a href="#"><svg><use href="#globe"/></svg>3DEXPERIENCE Marketplace</a>
                <a href="#"><svg><use href="#handshake"/></svg>Partner Solutions</a>
            </section>
            <section>
                <h3>Usług subskrypcji <svg><use href="#up"/></svg></h3>
                <a href="#"><svg><use href="#service"/></svg>Usług subskrypcji</a>
            </section>
        </div>
    </aside>
</main>

<div class="filters">
    <div class="filter-modes">
        <svg><use href="#g-funnel-off"/></svg>
        <svg><use href="#g-funnels-off"/></svg>
        <svg><use href="#g-funnels"/></svg>
        <button class="drop pressed" aria-label="Wybierz"><svg><use href="#cursor"/></svg></button>
        <svg><use href="#g-wand-off"/></svg>
    </div>
    <div class="filter-list">
        <svg><use href="#g-point"/><use href="#funnel"/></svg>
        <svg><use href="#g-vline"/><use href="#funnel"/></svg>
        <svg><use href="#g-face"/><use href="#funnel"/></svg>
        <svg><use href="#g-surface"/><use href="#funnel"/></svg>
        <svg><use href="#g-solid"/><use href="#funnel"/></svg>
        <svg><use href="#g-axis"/><use href="#funnel"/></svg>
        <svg><use href="#g-plane"/><use href="#funnel"/></svg>
        <svg><use href="#g-sq"/><use href="#funnel"/></svg>
        <svg><use href="#g-sketch"/><use href="#funnel"/></svg>
        <svg><use href="#g-seg"/><use href="#funnel"/></svg>
        <svg><use href="#g-mid"/><use href="#funnel"/></svg>
        <svg><use href="#g-center"/><use href="#funnel"/></svg>
        <svg><use href="#g-dim"/><use href="#funnel"/></svg>
        <svg><use href="#g-tag"/><use href="#funnel"/></svg>
        <svg><use href="#g-check"/><use href="#funnel"/></svg>
        <svg><use href="#g-frame"/><use href="#funnel"/></svg>
        <svg><use href="#g-balloon"/><use href="#funnel"/></svg>
        <svg><use href="#g-datum"/><use href="#funnel"/></svg>
        <svg><use href="#g-weld"/><use href="#funnel"/></svg>
        <svg><use href="#g-graph"/><use href="#funnel"/></svg>
        <svg><use href="#g-balloon"/><use href="#funnel"/></svg>
        <svg><use href="#g-hatch"/><use href="#funnel"/></svg>
        <svg><use href="#g-datum"/><use href="#funnel"/></svg>
        <svg><use href="#g-quad"/><use href="#funnel"/></svg>
        <svg><use href="#g-route"/><use href="#funnel"/></svg>
        <svg><use href="#g-node"/><use href="#funnel"/></svg>
        <svg><use href="#g-face"/><use href="#funnel-eye"/></svg>
        <svg><use href="#g-vline"/><use href="#funnel-eye"/></svg>
        <svg><use href="#g-point"/><use href="#funnel-eye"/></svg>
        <svg><use href="#g-abc-off"/></svg>
    </div>
</div>

<footer class="status">
    <span class="version">SOLIDWORKS Premium 2025 SP4.1</span>
    <span>-58.82mm</span>
    <span>69.87mm</span>
    <span>0mm</span>
    <span>Niedodefiniowany</span>
    <span class="mode">Edycja Szkic1</span>
    <span class="units">MMGS</span>
    <span>-</span>
    <svg><use href="#tag-gray"/></svg>
</footer>
</body>
</html>
```

FILE: styles.css
```css
* {
    margin: 0;
    padding: 0;
    box-sizing: border-box;
}

body {
    display: flex;
    flex-direction: column;
    height: 100vh;
    overflow: hidden;
    background: #f6f6f6;
    color: #222;
    font-family: "Open Sans", "Noto Sans", sans-serif;
    font-size: 6px;
    line-height: 8px;
}

button, input {
    border: 0;
    background: none;
    color: inherit;
    font: inherit;
}

a {
    color: inherit;
    text-decoration: none;
}

ul {
    list-style: none;
}

svg {
    width: 10px;
    height: 10px;
    flex: none;
}

.sprite {
    display: none;
}

.caret, .drop::after {
    content: "";
    flex: none;
    width: 4px;
    height: 2px;
    background: #555;
    clip-path: polygon(0 0, 100% 0, 50% 100%);
}

.arrow-right, .arrow-left {
    width: 3px;
    height: 5px;
    background: #444;
    clip-path: polygon(0 0, 100% 50%, 0 100%);
}

.arrow-left {
    transform: rotate(180deg);
}

.pressed {
    background: #b0b0b0;
    outline: 1px solid #999;
    outline-offset: -1px;
}

/* title bar */

.titlebar {
    display: flex;
    align-items: center;
    height: 19px;
    border-top: 1px solid #ddd;
    border-bottom: 1px solid #d4d4d4;
}

.brand {
    display: flex;
    align-items: center;
    width: 76px;
    height: 100%;
    padding: 0 3px 0 2px;
    border-right: 1px solid #eee;
    color: #d9302c;
    font-size: 7px;
}

.brand .ds {
    width: 12px;
    margin-right: 1px;
}

.brand .arrow-right {
    margin-left: auto;
    opacity: .7;
}

.quick {
    display: flex;
    height: 100%;
    margin-left: 11px;
}

.quick button {
    display: flex;
    align-items: center;
    justify-content: center;
    width: 16px;
}

.quick .drop {
    width: 24px;
    gap: 5px;
}

.quick .redo {
    width: 21px;
}

.quick .pressed {
    width: 23px;
}

.titlebar h1 {
    flex: 1;
    text-align: center;
    font-size: 6px;
    font-weight: normal;
}

.search {
    display: flex;
    align-items: center;
    gap: 2px;
    width: 129px;
    height: 12px;
    padding: 0 2px;
    border: 1px solid #c8c8c8;
    background: #fff;
}

.search svg {
    width: 9px;
    height: 9px;
}

.search input {
    flex: 1;
    min-width: 0;
}

.search input::placeholder {
    color: #555;
    opacity: 1;
}

.window {
    display: flex;
    margin-left: 2px;
}

.window button {
    display: flex;
    justify-content: center;
    width: 19px;
}

/* ribbon */

.ribbon {
    display: flex;
    height: 43px;
}

.group {
    display: flex;
    border-right: 1px solid #ddd;
}

.group.last {
    border: 0;
}

.tool {
    display: flex;
    flex-direction: column;
    align-items: center;
    height: 42px;
    padding-top: 3px;
    line-height: 7px;
    white-space: nowrap;
}

.tool svg {
    width: 11px;
    height: 11px;
    margin-bottom: 1px;
}

.tool .caret {
    margin: auto 0 5px;
}

.tool:disabled {
    color: #c4c4c4;
}

.exit {
    width: 19px;
    margin-left: 3px;
    background: linear-gradient(#b0b0b0 32px, #f4f4f4 32px);
}

.w24 { width: 24px; }
.w28 { width: 28px; }
.w32 { width: 32px; }
.w38 { width: 38px; }
.w40 { width: 40px; }
.w50 { width: 50px; }

.shapes {
    display: grid;
    grid-template-columns: 21px 21px 22px 13px;
    grid-template-rows: repeat(3, 14px);
    padding-left: 1px;
}

.shapes button {
    display: flex;
    align-items: center;
    gap: 3px;
    padding-left: 2px;
}

.stack {
    display: flex;
    flex-direction: column;
    width: 86px;
    padding: 1px 3px 0 1px;
}

.stack button {
    display: flex;
    align-items: center;
    gap: 4px;
    height: 14px;
}

.stack .caret {
    margin-left: auto;
}

.fold {
    align-self: flex-end;
    height: 10px;
    margin: 0 3px 2px auto;
}

.fold svg {
    width: 8px;
    height: 8px;
}

/* document area */

main {
    display: flex;
    flex: 1;
    min-height: 0;
}

.document {
    display: flex;
    flex-direction: column;
    flex: 1;
    min-width: 0;
}

.tabs {
    display: flex;
    height: 13px;
    background: #fff;
    border-top: 1px solid #bbb;
}

.tablist {
    display: flex;
    flex: 1;
    min-width: 0;
}

.tablist button {
    flex: 1 0 auto;
    border-right: 1px solid #999;
    border-bottom: 1px solid #bbb;
    background: #d2d2d2;
    white-space: nowrap;
}

.tablist .active {
    border-bottom-color: #f6f6f6;
    background: #f6f6f6;
}

.doc-btn {
    width: 14px;
    opacity: .6;
}

.doc-btn svg {
    width: 8px;
    height: 8px;
}

.work {
    display: flex;
    flex: 1;
    min-height: 0;
}

.tree {
    position: relative;
    z-index: 1;
    display: flex;
    flex-direction: column;
    width: 123px;
    border-right: 1px solid #aaa;
}

.grip {
    display: flex;
    justify-content: center;
    align-items: center;
    height: 10px;
    border-bottom: 1px solid #ccc;
}

.grip i {
    width: 3px;
    height: 3px;
    border: 1px solid #999;
    border-radius: 50%;
}

.tree-tabs {
    display: flex;
    height: 14px;
    margin-top: 1px;
}

.tree-tabs button {
    display: flex;
    flex: 1;
    align-items: center;
    justify-content: center;
    border: 1px solid #aaa;
    border-left: 0;
    background: #d2d2d2;
}

.tree-tabs .active {
    border-color: #f6f6f6;
    background: #f6f6f6;
}

.tree-tabs .step {
    flex: none;
    width: 9px;
    border-color: #eee;
    background: #fff;
}

.tree-filter {
    display: flex;
    align-items: center;
    height: 13px;
    margin: 0 2px 0 1px;
    padding-left: 1px;
    border: 1px solid #ddd;
    border-radius: 2px;
}

.root {
    display: flex;
    align-items: center;
    gap: 2px;
    height: 13px;
    margin-right: 1px;
    padding-left: 1px;
    border-bottom: 1px solid #a9a9c4;
    overflow: hidden;
    white-space: nowrap;
}

.tree ul {
    display: grid;
    grid-auto-rows: 1fr;
    height: 106px;
    margin-right: 1px;
    border-bottom: 1px solid #a9a9c4;
}

.tree li, .current {
    display: flex;
    align-items: center;
    gap: 3px;
    padding-left: 13px;
    white-space: nowrap;
}

.expand::before {
    content: "";
    width: 2px;
    height: 4px;
    margin: 0 4px 0 -9px;
    background: #555;
    clip-path: polygon(0 0, 100% 50%, 0 100%);
}

.current {
    height: 12px;
}

.scroll {
    width: 75px;
    height: 1px;
    margin: auto 0 4px 8px;
    background: #888;
}

.splitter {
    position: absolute;
    top: 202px;
    right: -5px;
    width: 6px;
    height: 22px;
    border: 1px solid #bbb;
    background: #f6f6f6;
}

.canvas {
    position: relative;
    flex: 1;
    background: #fff;
}

.drawing {
    display: block;
    width: 100%;
    height: 100%;
}

.contour {
    fill: #bababa;
    stroke: #1a1aee;
    stroke-width: 1.3;
}

.cross {
    stroke: #3a3af0;
}

.vertex {
    fill: #0000d0;
}

.axis-x {
    fill: #e02020;
    font-size: 5px;
}

.axis-y {
    fill: #1a8a1a;
    font-size: 5px;
}

.view-tools {
    position: absolute;
    top: 1px;
    left: 50%;
    display: flex;
    padding-left: 2px;
    transform: translateX(-50%);
}

.view-tools button {
    display: flex;
    align-items: center;
    width: 13px;
    height: 12px;
}

.view-tools .drop {
    width: 22px;
    gap: 4px;
}

.confirm {
    position: absolute;
    top: 16px;
    right: 15px;
    width: 40px;
    height: 32px;
}

.pane-tabs {
    position: absolute;
    top: 14px;
    right: 0;
    width: 14px;
}

.pane-tabs button {
    display: flex;
    align-items: center;
    justify-content: center;
    width: 14px;
    height: 13px;
    border: 1px solid #999;
    border-top-width: 0;
    background: #ccc;
}

.pane-tabs .active {
    background: #f6f6f6;
}

.view-name {
    position: absolute;
    bottom: 1px;
    left: 5px;
    color: #000;
}

.model-tabs {
    display: flex;
    height: 9px;
    border-top: 1px solid #aaa;
}

.steps {
    display: flex;
    width: 36px;
}

.steps i {
    flex: 1;
    border: 1px solid #999;
    border-left: 0;
    background: #b5b5b5;
}

.model-tabs button {
    padding: 0 5px;
    border-right: 1px solid #aaa;
    background: #d2d2d2;
}

.model-tabs .active {
    background: #f6f6f6;
    color: #000;
    font-weight: bold;
}

/* task pane */

.pane {
    width: 197px;
    border-left: 1px solid #999;
    color: #555;
}

.pane header {
    display: flex;
    align-items: center;
    gap: 2px;
    height: 12px;
    padding: 0 2px 0 4px;
    background: #a9abaf;
    color: #111;
}

.pane header span {
    font-size: 10px;
    line-height: 8px;
}

.pane header h2 {
    flex: 1;
    text-align: center;
    font-size: 6px;
}

.pane header button {
    display: flex;
}

.pane header .pin {
    width: 7px;
    height: 7px;
}

.pane-body {
    padding: 13px 14px 0 9px;
}

.pane-body a {
    display: flex;
    align-items: center;
    gap: 3px;
    height: 15px;
}

.pane-body .welcome {
    margin-bottom: 11px;
}

.pane-body section {
    padding-bottom: 12px;
    border-top: 1px solid #bbb;
}

.pane-body h3 {
    display: flex;
    align-items: center;
    justify-content: space-between;
    height: 12px;
    padding: 0 3px 0 1px;
    color: #333;
    font-size: 6px;
}

.pane-body h3 svg {
    width: 8px;
    height: 8px;
}

/* selection filters */

.filters {
    display: flex;
    align-items: center;
    height: 18px;
    border-bottom: 1px solid #c4c8c4;
}

.filter-modes {
    display: flex;
    align-items: center;
    gap: 4px;
    width: 89px;
    margin-right: 4px;
    padding-left: 9px;
    border-right: 1px solid #ccc;
}

.filter-modes .drop {
    display: flex;
    align-items: center;
    justify-content: space-around;
    width: 22px;
    height: 13px;
}

.filter-list {
    display: flex;
    justify-content: space-between;
    width: 429px;
    padding-right: 1px;
}

.filters::before {
    content: "";
    position: absolute;
    width: 1px;
    height: 14px;
    margin-left: 2px;
    border-left: 1px dotted #999;
}

.filters::after {
    content: "";
    width: 1px;
    height: 16px;
    margin-left: 5px;
    background: #bbb;
}

/* status bar */

.status {
    display: flex;
    align-items: center;
    gap: 11px;
    height: 9px;
    padding: 0 2px 0 1px;
}

.version {
    margin-right: auto;
}

.mode {
    margin-right: 66px;
}

.units {
    margin-right: 10px;
}

.status svg {
    width: 8px;
    height: 8px;
    margin-left: 3px;
}
```
